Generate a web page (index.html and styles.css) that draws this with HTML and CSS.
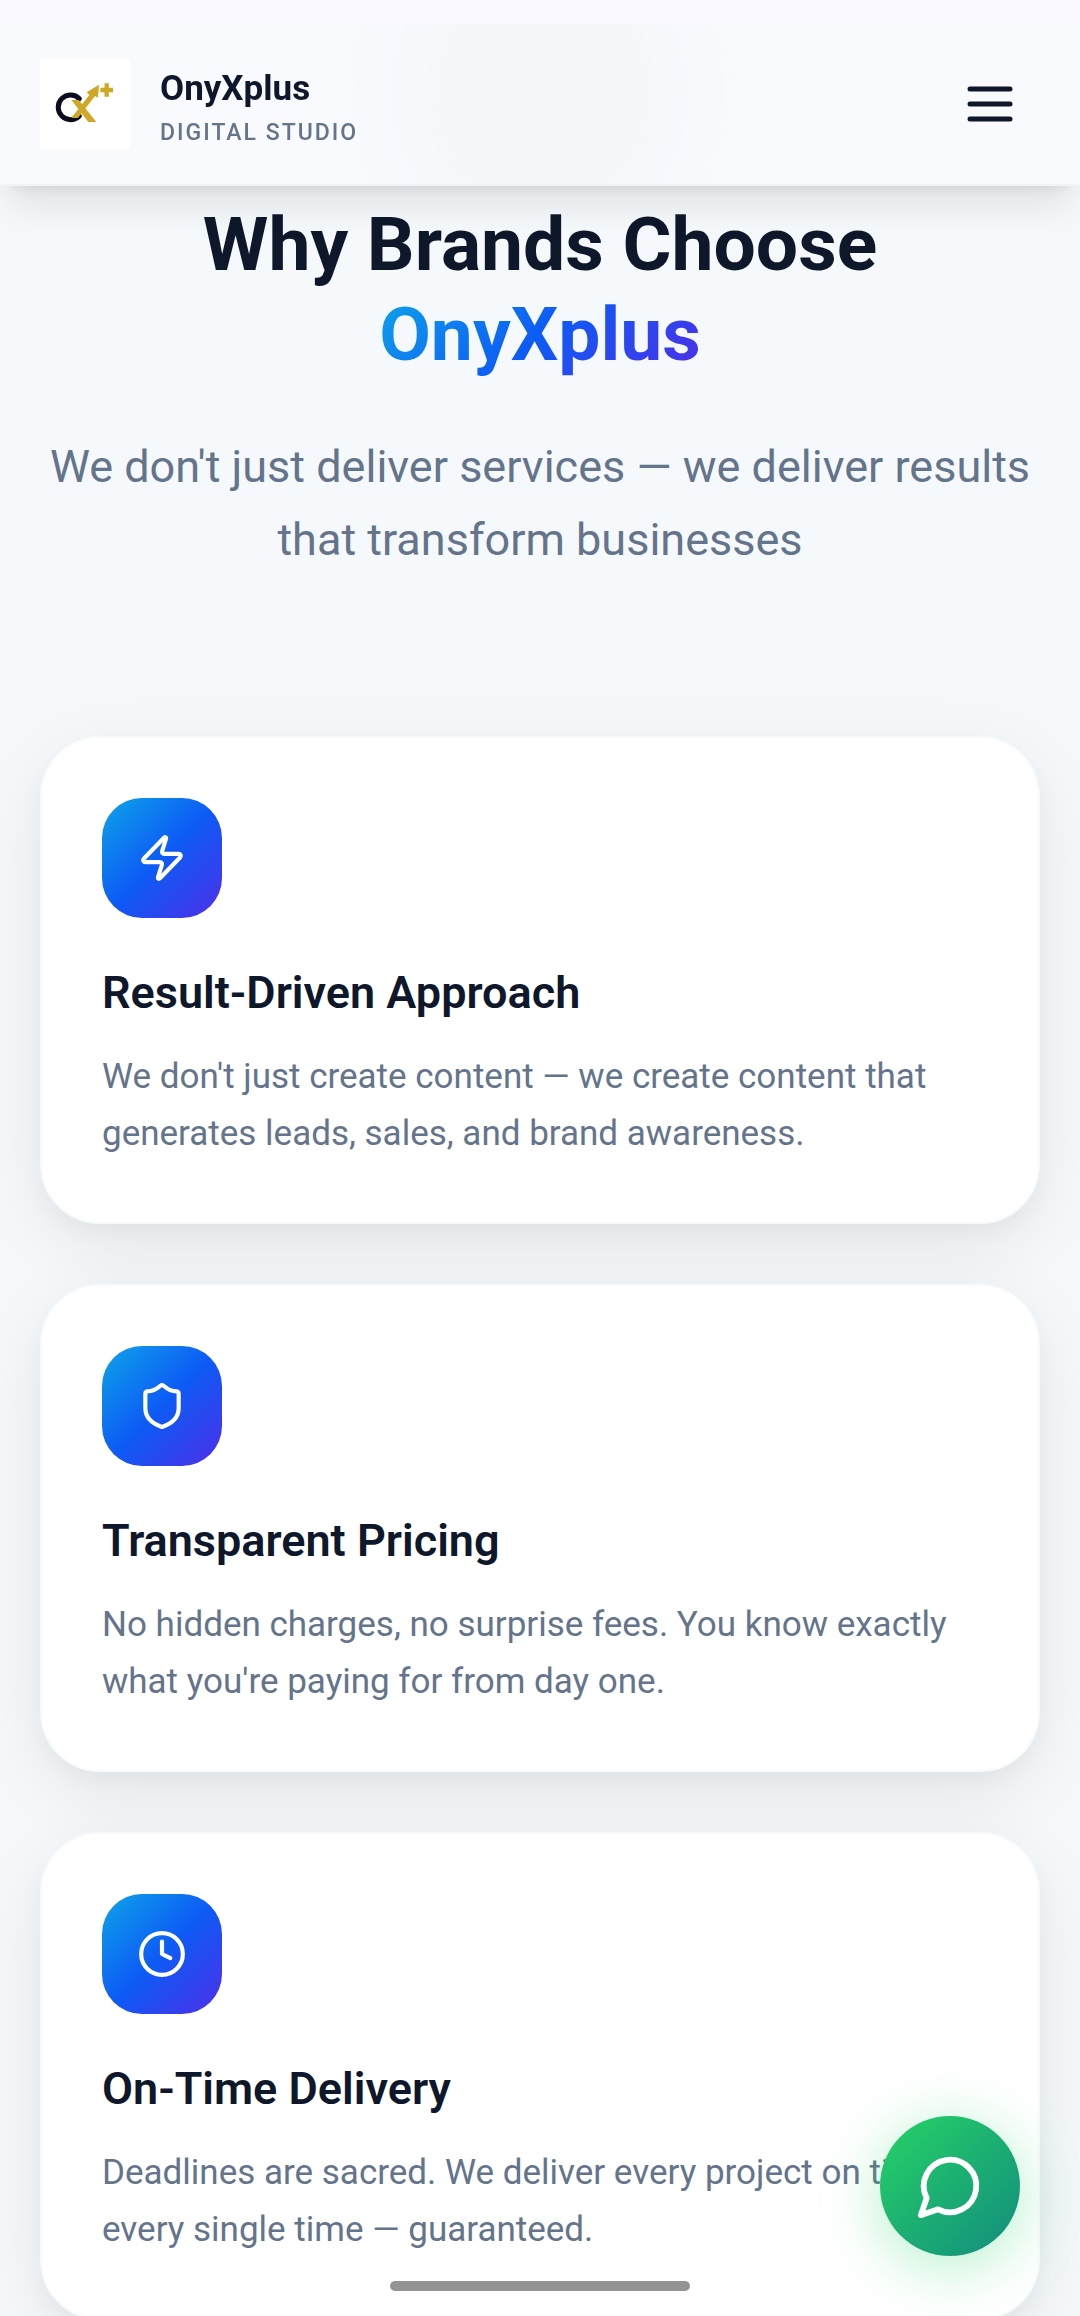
FILE: index.html
```html
<!DOCTYPE html>
<html lang="en">
<head>
    <meta charset="UTF-8">
    <meta name="viewport" content="width=device-width, initial-scale=1.0">
    <title>OnyXplus Digital Studio</title>
    <link rel="stylesheet" href="styles.css">
</head>
<body>
    <header class="header">
        <a class="brand" href="#">
            <svg class="logo" viewBox="30 27 270 270" aria-hidden="true">
                <path d="M148 146A37 37 0 1 0 148 198" fill="none" stroke="#0b0d1c" stroke-width="15" stroke-linecap="round"/>
                <path d="M124 150h22l53 66h-24z" fill="#cfa827"/>
                <path d="M124 204l54-69-8-8 37-23-3 39-9-5-51 66z" fill="#cfa827"/>
                <path d="M211 120h38M230 100v40" stroke="#cfa827" stroke-width="13"/>
            </svg>
            <span class="brand-text">
                <span class="brand-name">OnyXplus</span>
                <span class="brand-tag">DIGITAL STUDIO</span>
            </span>
        </a>
        <button class="menu-btn" type="button" aria-label="Open menu">
            <svg class="icon" viewBox="0 0 24 24"><path d="M4 6h16M4 12h16M4 18h16"/></svg>
        </button>
    </header>

    <main class="why">
        <h2 class="why-title">Why Brands Choose <br><span class="gradient-text">OnyXplus</span></h2>
        <p class="why-text">We don't just deliver services — we deliver results that transform businesses</p>

        <div class="cards">
            <div class="card">
                <div class="card-icon">
                    <svg class="icon" viewBox="0 0 24 24"><path d="M4 14a1 1 0 0 1-.78-1.63l9.9-10.2a.5.5 0 0 1 .86.46l-1.92 6.02A1 1 0 0 0 13 10h7a1 1 0 0 1 .78 1.63l-9.9 10.2a.5.5 0 0 1-.86-.46l1.92-6.02A1 1 0 0 0 11 14z"/></svg>
                </div>
                <h3 class="card-title">Result-Driven Approach</h3>
                <p class="card-text">We don't just create content — we create content that generates leads, sales, and brand awareness.</p>
            </div>

            <div class="card">
                <div class="card-icon">
                    <svg class="icon" viewBox="0 0 24 24"><path d="M20 13c0 5-3.5 7.5-7.66 8.95a1 1 0 0 1-.67-.01C7.5 20.5 4 18 4 13V6a1 1 0 0 1 1-1c2 0 4.5-1.2 6.24-2.72a1.17 1.17 0 0 1 1.52 0C14.51 3.81 17 5 19 5a1 1 0 0 1 1 1z"/></svg>
                </div>
                <h3 class="card-title">Transparent Pricing</h3>
                <p class="card-text">No hidden charges, no surprise fees. You know exactly what you're paying for from day one.</p>
            </div>

            <div class="card">
                <div class="card-icon">
                    <svg class="icon" viewBox="0 0 24 24"><circle cx="12" cy="12" r="10"/><path d="M12 6v6l4 2"/></svg>
                </div>
                <h3 class="card-title">On-Time Delivery</h3>
                <p class="card-text">Deadlines are sacred. We deliver every project on time, every single time — guaranteed.</p>
            </div>
        </div>
    </main>

    <a class="chat-btn" href="#" aria-label="Chat with us">
        <svg class="icon" viewBox="0 0 24 24"><path d="M7.9 20A9 9 0 1 0 4 16.1L2 22Z"/></svg>
    </a>
    <div class="home-bar"></div>
</body>
</html>
```

FILE: styles.css
```css
* {
    box-sizing: border-box;
    margin: 0;
    padding: 0;
}
body {
    background-color: #f5f9fc;
    color: #0f172a; /* Dark Navy */
    font-family: Roboto, Arial, sans-serif;
}
.icon {
    display: block;
    fill: none;
    stroke: currentColor;
    stroke-width: 2;
    stroke-linecap: round;
    stroke-linejoin: round;
}

/* Header */
.header {
    position: fixed;
    top: 0;
    left: 0;
    right: 0;
    z-index: 10;
    display: flex;
    justify-content: space-between;
    align-items: center;
    padding: 59px 40px 35px;
    border-bottom: 2px solid #f1f3f8;
    background:
        linear-gradient(#faf9ff 24px, transparent 24px),
        radial-gradient(ellipse 200px 220px at 50% 50%, #f4f8fb 50%, #f8fafe 100%);
    box-shadow: 0 25px 38px -8px rgba(0, 0, 0, 0.1), 0 10px 15px -10px rgba(0, 0, 0, 0.1);
}
.brand {
    display: flex;
    align-items: center;
    gap: 30px;
    color: inherit;
    text-decoration: none;
}
.logo {
    width: 90px;
    height: 90px;
    background-color: #ffffff;
}
.brand-text {
    display: flex;
    flex-direction: column;
    gap: 6px;
    padding-top: 8px;
}
.brand-name {
    font-size: 35px;
    line-height: 44px;
    font-weight: 700;
}
.brand-tag {
    color: #64748b; /* Slate */
    font-size: 23px;
    line-height: 32px;
    font-weight: 500;
    letter-spacing: 2px;
}
.menu-btn {
    padding: 0 20px;
    border: none;
    background: none;
    color: #0f172a;
    cursor: pointer;
}
.menu-btn .icon {
    width: 60px;
    height: 60px;
}

/* Why section */
.why {
    padding: 199px 40px 60px;
}
.why-title {
    font-size: 75px;
    line-height: 90px;
    font-weight: 700;
    text-align: center;
}
.gradient-text {
    background: linear-gradient(135deg, #0ea5e9, #0d5bf5 50%, #4f2ee8);
    -webkit-background-clip: text;
    background-clip: text;
    color: transparent;
}
.why-text {
    margin: 51px 0 160px;
    color: #64748b;
    font-size: 45px;
    line-height: 73px;
    text-align: center;
}

/* Cards */
.cards {
    display: grid;
    gap: 60px;
}
.card {
    padding: 60px;
    border: 2px solid #f8fafc;
    border-radius: 60px;
    background-color: #ffffff;
    box-shadow: 0 20px 75px rgba(0, 0, 0, 0.08), 0 10px 20px rgba(0, 0, 0, 0.03);
}
.card-icon {
    display: flex;
    align-items: center;
    justify-content: center;
    width: 120px;
    height: 120px;
    margin-bottom: 40px;
    border-radius: 40px;
    background: linear-gradient(135deg, #0ea5e9, #0d5bf5 50%, #4f2ee8);
    color: #ffffff;
}
.card-icon .icon {
    width: 50px;
    height: 50px;
}
.card-title {
    margin-bottom: 20px;
    font-size: 45px;
    line-height: 70px;
    font-weight: 600;
}
.card-text {
    color: #64748b;
    font-size: 35px;
    line-height: 57px;
}

/* Floating chat button */
.chat-btn {
    position: fixed;
    right: 60px;
    bottom: 60px;
    z-index: 5;
    display: flex;
    align-items: center;
    justify-content: center;
    width: 140px;
    height: 140px;
    border-radius: 50%;
    background: linear-gradient(135deg, #25d366, #128c7e);
    color: #ffffff;
    box-shadow: 0 10px 60px rgba(37, 211, 102, 0.35);
}
.chat-btn .icon {
    width: 70px;
    height: 70px;
}
.home-bar {
    position: fixed;
    bottom: 25px;
    left: 50%;
    z-index: 6;
    width: 300px;
    height: 10px;
    margin-left: -150px;
    border-radius: 5px;
    background-color: #949494;
}
```
